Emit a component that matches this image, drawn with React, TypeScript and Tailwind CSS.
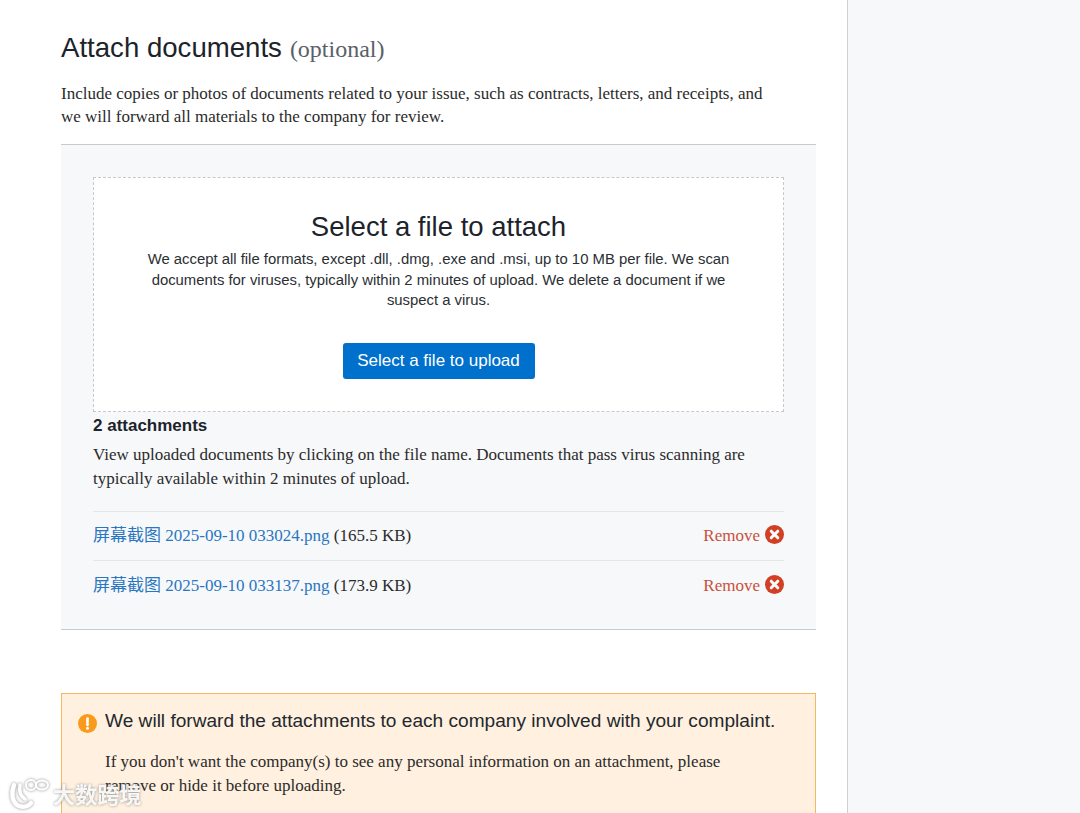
import React from "react";

const serif = "font-['Liberation_Serif','Noto_Sans_CJK_SC',serif]";
const sans = "font-['Liberation_Sans',sans-serif]";

function RemoveIcon() {
  return (
    <svg width="19" height="19" viewBox="0 0 19 19" className="mb-[3px] block">
      <circle cx="9.5" cy="9.5" r="9.5" fill="#d13f25" />
      <path d="M6.2 6.2l6.6 6.6M12.8 6.2l-6.6 6.6" stroke="#fff" strokeWidth="3" strokeLinecap="round" />
    </svg>
  );
}

function AttachmentRow({ name, size }: { name: string; size: string }) {
  return (
    <div className="flex h-[49px] items-center justify-between border-t border-[#e4e6e9] text-[17px] leading-6 last:pt-[2px]">
      <div>
        <span className="text-[#2a76c0]">{name}</span> <span className="text-[#2b2b2b]">{size}</span>
      </div>
      <div className="flex items-center gap-[5px]">
        <span className="text-[#c9503c]">Remove</span>
        <RemoveIcon />
      </div>
    </div>
  );
}

function Watermark() {
  return (
    <div className="absolute left-[9px] top-[776px] flex items-start gap-[4px] drop-shadow-[0_0_1.5px_#8a8a8a]">
      <svg width="40" height="34" viewBox="0 0 40 34" fill="none">
        <path d="M5 9c-3 8-2 16 3 20 5 3 11 2 14-2" stroke="#fff" strokeWidth="4.5" strokeLinecap="round" />
        <path d="M11 9c-1 6 0 11 5 14" stroke="#fff" strokeWidth="3.5" strokeLinecap="round" />
        <circle cx="22" cy="9" r="5" stroke="#fff" strokeWidth="2" />
        <ellipse cx="33" cy="9" rx="6" ry="4.5" stroke="#fff" strokeWidth="2" />
      </svg>
      <span className="mt-[1px] font-['Noto_Sans_CJK_SC',sans-serif] text-[22px] font-bold leading-8 tracking-[0.2px] text-white/90">大数跨境</span>
    </div>
  );
}

export default function App() {
  return (
    <div className="relative flex h-[813px] w-[1080px] overflow-hidden bg-white">
      <main className="w-[848px] shrink-0 border-r border-[#cfd1d4] pl-[61px] pr-[31px]">
        <h2 className="mt-[30px] flex items-baseline gap-[8px] leading-9">
          <span className={`${sans} text-[27.6px] text-[#1c232b]`}>Attach documents</span>
          <span className={`${serif} text-[24px] text-[#5a6068]`}>(optional)</span>
        </h2>
        <p className={`${serif} mt-[14.5px] w-[720px] text-[17px] leading-[23.5px] text-[#2b2b2b]`}>
          Include copies or photos of documents related to your issue, such as contracts, letters, and receipts, and we will forward all materials to the company for review.
        </p>
        <section className="mt-[15.5px] border-y border-[#c9cbce] bg-[#f7f8fa] px-[32px] pb-[20px] pt-[32px]">
          <div className={`${sans} flex h-[235px] flex-col items-center border border-dashed border-[#c6c8cb] bg-white px-[50px] pt-[31px] text-center`}>
            <h3 className="text-[27.5px] leading-9 text-[#1c232b]">Select a file to attach</h3>
            <p className="mt-[4px] text-[14.87px] leading-[20.5px] text-[#2b2f33]">
              We accept all file formats, except .dll, .dmg, .exe and .msi, up to 10 MB per file. We scan documents for viruses, typically within 2 minutes of upload. We delete a document if we suspect a virus.
            </p>
            <button className="mt-[32px] h-[36px] w-[192px] rounded-[3px] bg-[#0070cd] pt-[1px] text-[17px] text-white">Select a file to upload</button>
          </div>
          <h4 className={`${sans} mt-[2px] text-[17px] font-bold leading-6 text-[#1c232b]`}>2 attachments</h4>
          <p className={`${serif} mt-[5px] text-[17px] leading-[23.5px] text-[#2b2b2b]`}>
            View uploaded documents by clicking on the file name. Documents that pass virus scanning are typically available within 2 minutes of upload.
          </p>
          <div className={`${serif} mt-[21px]`}>
            <AttachmentRow name="屏幕截图 2025-09-10 033024.png" size="(165.5 KB)" />
            <AttachmentRow name="屏幕截图 2025-09-10 033137.png" size="(173.9 KB)" />
          </div>
        </section>
        <section className="mt-[63px] flex gap-[8px] border border-[#f6b75f] bg-[#fff0df] pb-[40px] pl-[16px] pr-[20px] pt-[13px]">
          <svg width="19" height="19" viewBox="0 0 19 19" className="mt-[7px] shrink-0">
            <circle cx="9.5" cy="9.5" r="9.5" fill="#f99a1c" />
            <path d="M9.5 4.5v6.5" stroke="#fff" strokeWidth="2.6" strokeLinecap="round" />
            <circle cx="9.5" cy="14.3" r="1.5" fill="#fff" />
          </svg>
          <div>
            <h4 className={`${sans} whitespace-nowrap text-[19.1px] leading-[27px] text-[#22282e]`}>We will forward the attachments to each company involved with your complaint.</h4>
            <p className={`${serif} mt-[16px] w-[630px] text-[17px] leading-[23.5px] text-[#2b2b2b]`}>
              If you don't want the company(s) to see any personal information on an attachment, please remove or hide it before uploading.
            </p>
          </div>
        </section>
      </main>
      <aside className="flex-1 bg-[#f7f8fa]" />
      <Watermark />
    </div>
  );
}
